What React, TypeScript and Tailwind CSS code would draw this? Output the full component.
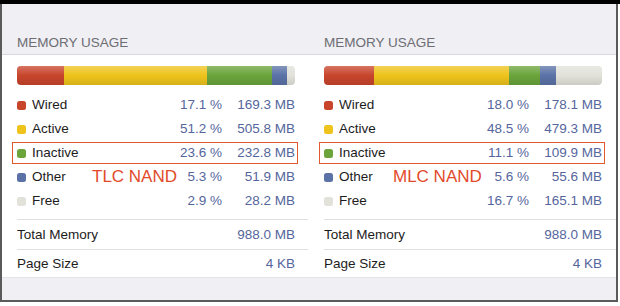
type Item = { label: string; dot: string; pct: string; mb: string; share: number }

const COLORS = {
  wired: '#c8452c',
  active: '#eec31c',
  inactive: '#6aa43b',
  other: '#5a72a6',
  free: '#e2e2db',
}

function makeItems(vals: [string, string][]): Item[] {
  const keys = ['Wired', 'Active', 'Inactive', 'Other', 'Free']
  const dots = [COLORS.wired, COLORS.active, COLORS.inactive, COLORS.other, COLORS.free]
  return vals.map(([pct, mb], i) => ({
    label: keys[i],
    dot: dots[i],
    pct,
    mb,
    share: parseFloat(pct),
  }))
}

const tlc = makeItems([
  ['17.1 %', '169.3 MB'],
  ['51.2 %', '505.8 MB'],
  ['23.6 %', '232.8 MB'],
  ['5.3 %', '51.9 MB'],
  ['2.9 %', '28.2 MB'],
])

const mlc = makeItems([
  ['18.0 %', '178.1 MB'],
  ['48.5 %', '479.3 MB'],
  ['11.1 %', '109.9 MB'],
  ['5.6 %', '55.6 MB'],
  ['16.7 %', '165.1 MB'],
])

function UsageBar({ items }: { items: Item[] }) {
  return (
    <div className="relative flex h-[19px] overflow-hidden rounded-[4px]">
      {items.map((it) => (
        <div key={it.label} className="h-full" style={{ flexGrow: it.share, flexBasis: 0, backgroundColor: it.dot }} />
      ))}
      <div className="absolute inset-0 rounded-[4px] bg-gradient-to-b from-white/25 via-transparent to-black/10" />
    </div>
  )
}

function Panel({ items, tag, left }: { items: Item[]; tag: string; left: boolean }) {
  const pad = left ? 'pl-[15px] pr-[13px]' : 'pl-[16px] pr-[14px]'
  const sep = left ? 'ml-[15px]' : 'ml-[16px]'
  return (
    <div className={left ? 'w-[306px] flex flex-col' : 'w-[308px] flex flex-col'}>
      <div className={`h-[51px] bg-[#efeff4] border-b border-[#d9d9dd] ${pad} flex items-end pb-[5px]`}>
        <span className="text-[13.5px] text-[#6d6d72] leading-none">MEMORY USAGE</span>
      </div>
      <div className="bg-white">
        <div className={`${pad} pt-[11px]`}>
          <UsageBar items={items} />
          <div className="mt-[8px]">
            {items.map((it) => (
              <div key={it.label} className="relative flex h-[24px] items-center">
                <span className="mr-[6px] h-[9px] w-[9px] rounded-[2.5px]" style={{ backgroundColor: it.dot }} />
                <span className="flex-1 text-[#1c1c1c]">{it.label}</span>
                <span className="text-right text-[#55669c]">{it.pct}</span>
                <span className="w-[73px] text-right text-[#55669c]">{it.mb}</span>
                {it.label === 'Inactive' && (
                  <div className="absolute -left-[5px] -right-[3px] top-[1px] bottom-[1px] border-[1.5px] border-[#e2582f]" />
                )}
                {it.label === 'Other' && (
                  <span
                    className={`absolute ${left ? 'left-[75px]' : 'left-[69px]'} top-[1px] text-[17px] leading-[22px] text-[#e24a2a]`}
                  >
                    {tag}
                  </span>
                )}
              </div>
            ))}
          </div>
        </div>
        <div className={`${sep} mt-[6px] border-t border-[#e0e0e4]`} />
        <div className={`${pad} flex h-[29px] items-center justify-between`}>
          <span className="text-[#1c1c1c]">Total Memory</span>
          <span className="text-[#55669c]">988.0 MB</span>
        </div>
        <div className={`${sep} border-t border-[#e0e0e4]`} />
        <div className={`${pad} flex h-[27px] items-center justify-between`}>
          <span className="text-[#1c1c1c]">Page Size</span>
          <span className="text-[#55669c]">4 KB</span>
        </div>
      </div>
      <div className="flex-1 border-t border-[#e4e4e8] bg-[#efeff4]" />
    </div>
  )
}

export default function App() {
  return (
    <div className="h-[306px] w-[620px] bg-white text-[13.5px] leading-none" style={{ fontFamily: '"Liberation Sans", Arial, sans-serif' }}>
      <div className="h-[4px] bg-black" />
      <div className="flex h-[298px] w-[618px] border-x-2 border-b-2 border-[#5a5a5a]">
        <Panel items={tlc} tag="TLC NAND" left />
        <Panel items={mlc} tag="MLC NAND" left={false} />
      </div>
    </div>
  )
}
